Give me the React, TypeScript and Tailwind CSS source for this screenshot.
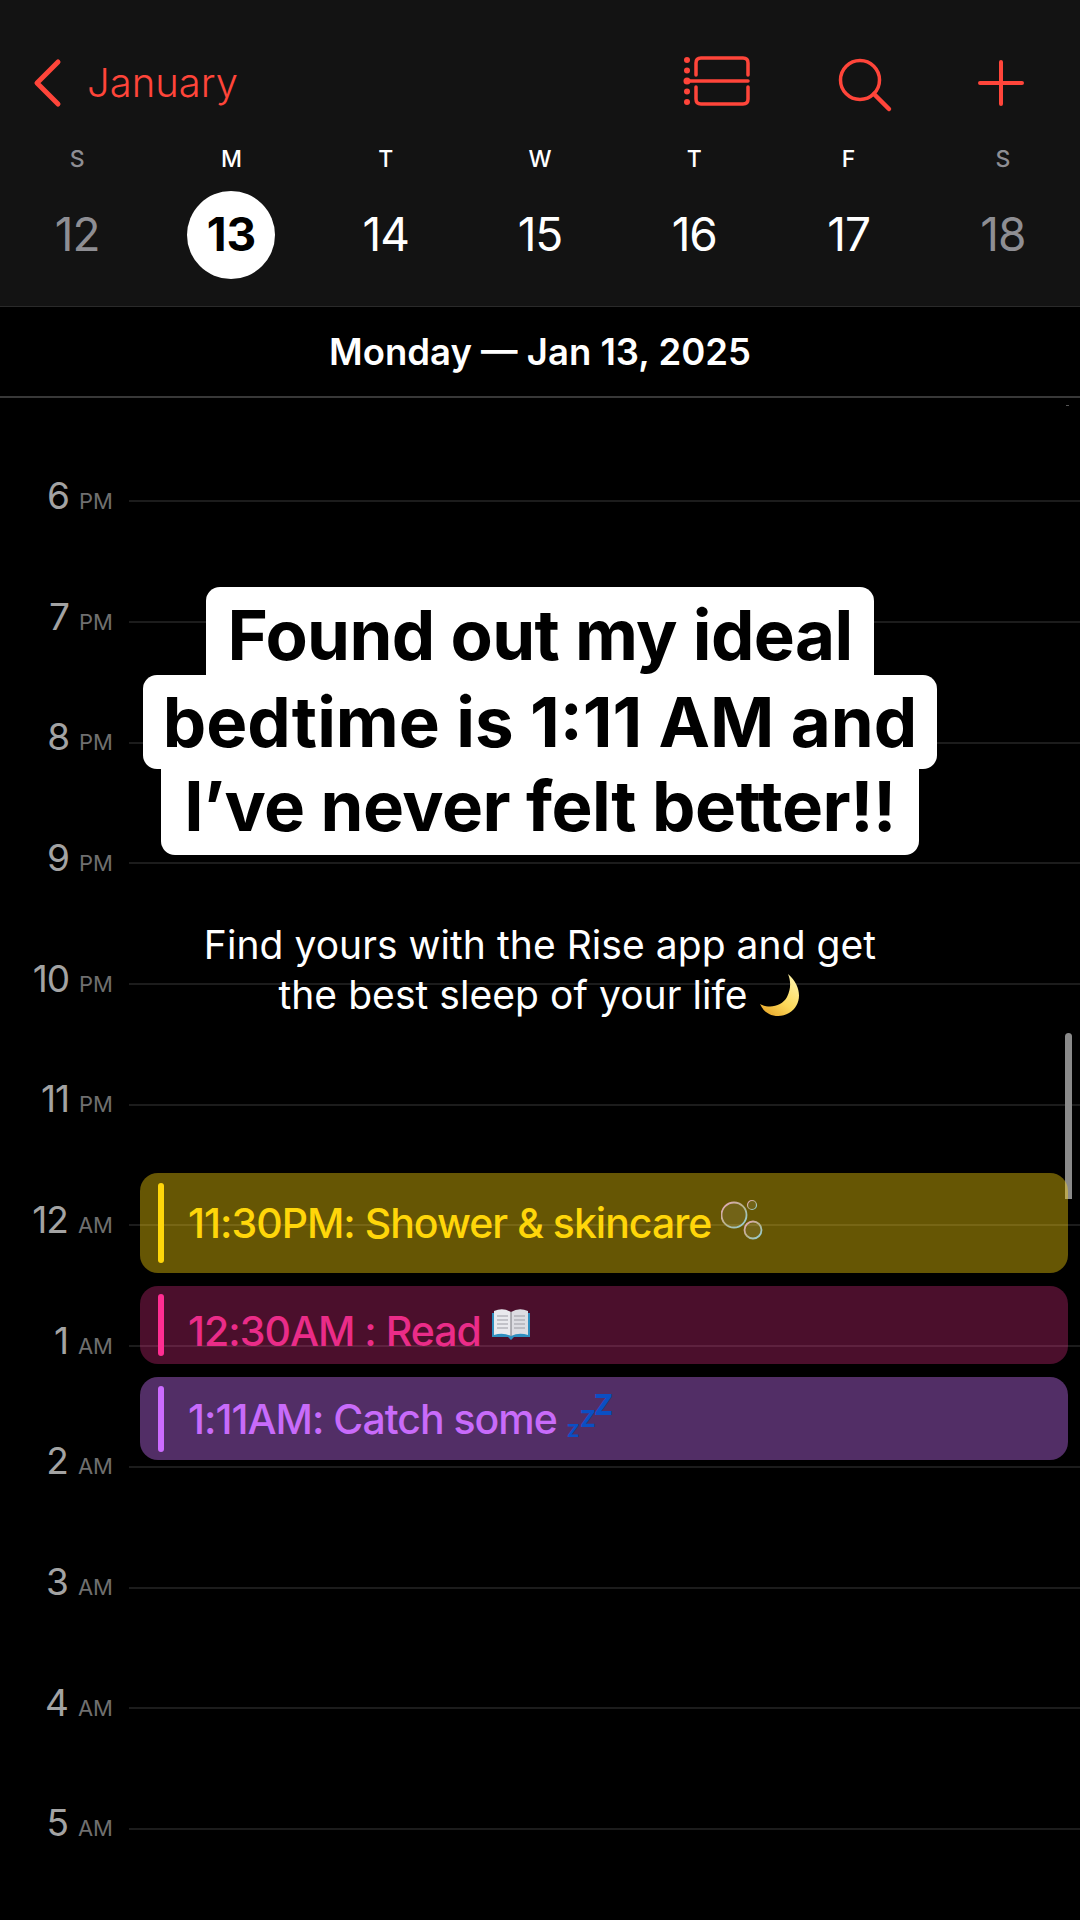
import React from "react";

const font = { fontFamily: "Inter, 'Noto Sans', sans-serif" };

const days = [
  { l: "S", n: "12", muted: true },
  { l: "M", n: "13", today: true },
  { l: "T", n: "14" },
  { l: "W", n: "15" },
  { l: "T", n: "16" },
  { l: "F", n: "17" },
  { l: "S", n: "18", muted: true },
];

const hours = [
  ["6", "PM"], ["7", "PM"], ["8", "PM"], ["9", "PM"], ["10", "PM"], ["11", "PM"],
  ["12", "AM"], ["1", "AM"], ["2", "AM"], ["3", "AM"], ["4", "AM"], ["5", "AM"],
];

function Chevron() {
  return (
    <svg width="30" height="50" viewBox="0 0 30 50" fill="none" className="shrink-0">
      <path d="M26 4 L5 25 L26 46" stroke="#ff453a" strokeWidth="5" strokeLinecap="round" strokeLinejoin="round" />
    </svg>
  );
}

function DayListIcon() {
  return (
    <svg width="68" height="54" viewBox="0 0 68 54" fill="none" className="shrink-0">
      <g fill="#ff453a">
        <circle cx="4" cy="4" r="3" />
        <circle cx="4" cy="14.5" r="3" />
        <circle cx="4" cy="25" r="3.5" />
        <circle cx="4" cy="35.5" r="3" />
        <circle cx="4" cy="46" r="3" />
      </g>
      <path d="M4 25 H65" stroke="#ff453a" strokeWidth="3.5" strokeLinecap="round" />
      <path d="M13 19 V7 Q13 2 18 2 H60 Q65 2 65 7 V19" stroke="#ff453a" strokeWidth="3.5" strokeLinecap="round" />
      <path d="M13 31 V43 Q13 48 18 48 H60 Q65 48 65 43 V31" stroke="#ff453a" strokeWidth="3.5" strokeLinecap="round" />
    </svg>
  );
}

function SearchIcon() {
  return (
    <svg width="56" height="56" viewBox="0 0 56 56" fill="none" className="shrink-0">
      <circle cx="22" cy="22" r="19.5" stroke="#ff453a" strokeWidth="3.5" />
      <path d="M36 36 L51 51" stroke="#ff453a" strokeWidth="4.5" strokeLinecap="round" />
    </svg>
  );
}

function PlusIcon() {
  return (
    <svg width="46" height="46" viewBox="0 0 46 46" fill="none" className="shrink-0">
      <path d="M23 2 V44 M2 23 H44" stroke="#ff453a" strokeWidth="4" strokeLinecap="round" />
    </svg>
  );
}

function Moon() {
  return (
    <svg width="44" height="44" viewBox="0 0 44 44" className="inline-block align-[-8px] ml-[10px]">
      <defs>
        <linearGradient id="moonG" x1="0.9" y1="0" x2="0.2" y2="1">
          <stop offset="0" stopColor="#fff6b0" />
          <stop offset="0.6" stopColor="#fbd85a" />
          <stop offset="1" stopColor="#e9a92c" />
        </linearGradient>
      </defs>
      <path d="M30 1 C45 14 44 32 31 40 C21 46 7 43 2 31 C12 36 24 33 29 24 C33 16 33 8 30 1 Z" fill="url(#moonG)" />
    </svg>
  );
}

function Bubbles() {
  const Rim = ({ cx, cy, r }: { cx: number; cy: number; r: number }) => (
    <circle cx={cx} cy={cy} r={r} fill="#ffffff" fillOpacity="0.08" stroke="url(#bubG)" strokeWidth={r > 6 ? 1.8 : 1.2} />
  );
  return (
    <svg width="42" height="42" viewBox="0 0 42 42" className="shrink-0 ml-[10px] mt-[-6px]">
      <defs>
        <linearGradient id="bubG" x1="0" y1="0" x2="1" y2="1">
          <stop offset="0" stopColor="#e7a9c0" />
          <stop offset="0.5" stopColor="#b8b28a" />
          <stop offset="1" stopColor="#8fd3e6" />
        </linearGradient>
      </defs>
      <Rim cx={13} cy={16} r={12.5} />
      <Rim cx={31} cy={6} r={4.5} />
      <Rim cx={32} cy={31} r={8.5} />
    </svg>
  );
}

function Book() {
  return (
    <svg width="40" height="33" viewBox="0 0 40 33" className="shrink-0 ml-[10px] mt-[-2px]">
      <path d="M1 5 H39 V29 H23 L20 32 L17 29 H1 Z" fill="#2f8fc0" />
      <path d="M3 3 Q12 -1 20 4 V28 Q12 24 3 27 Z" fill="#e9e9ee" />
      <path d="M37 3 Q28 -1 20 4 V28 Q28 24 37 27 Z" fill="#dcdce2" />
      <path d="M6 8 H17 M6 12 H17 M6 16 H17 M6 20 H17 M23 8 H34 M23 12 H34 M23 16 H34 M23 20 H34" stroke="#9b9ba3" strokeWidth="1.2" />
      <path d="M20 4 V28" stroke="#77777f" strokeWidth="1" />
    </svg>
  );
}

function Zzz() {
  return (
    <svg width="46" height="43" viewBox="0 0 46 43" className="shrink-0 ml-[10px] mt-[-4px] overflow-visible" style={font}>
      <g fill="#0b4fc4" fontWeight="800">
        <text x="0" y="42" fontSize="18">Z</text>
        <text x="13" y="32" fontSize="23">Z</text>
        <text x="27" y="20" fontSize="28">Z</text>
      </g>
    </svg>
  );
}

export default function App() {
  return (
    <div className="relative w-[1080px] h-[1920px] bg-black overflow-hidden text-white" style={font}>
      {/* Header */}
      <header className="h-[307px] bg-[#131313] border-b border-[#2a2a2a] pt-[58px]">
        <div className="flex items-center h-[50px] pl-[32px]">
          <Chevron />
          <span className="ml-[25px] text-[40px] leading-[50px] font-light text-[#ff453a]">January</span>
          <div className="ml-auto flex items-center">
            <DayListIcon />
            <div className="ml-[87px] mt-[6px]"><SearchIcon /></div>
            <div className="ml-[84px] mr-[56px]"><PlusIcon /></div>
          </div>
        </div>
        <div className="grid grid-cols-7 mt-[39px]">
          {days.map((d, i) => (
            <div key={i} className="flex flex-col items-center">
              <span className={`text-[23px] leading-[24px] font-medium ${d.muted ? "text-[#8e8e93]" : "text-white"}`}>{d.l}</span>
              <span
                className={`mt-[20px] w-[88px] h-[88px] rounded-full flex items-center justify-center text-[46px] ${
                  d.today ? "bg-white text-black font-bold tracking-[0px]" : d.muted ? "text-[#8e8e93] tracking-[-1px]" : "text-white tracking-[-1px]"
                }`}
              >
                <span className="mt-[-2px]">{d.n}</span>
              </span>
            </div>
          ))}
        </div>
      </header>

      {/* Date bar */}
      <div className="h-[91px] pt-[2px] flex items-center justify-center border-b-2 border-[#383838] text-[36.5px] font-semibold text-white">
        Monday — Jan 13, 2025
      </div>

      {/* Timeline */}
      <div className="pt-[43px]">
        {hours.map(([h, p]) => (
          <div key={h + p} className="flex items-center h-[120.7px]">
            <div className="w-[113px] shrink-0 flex items-baseline justify-end mt-[-6px] mr-[16px]">
              <span className="text-[37px] leading-[40px] text-[#a3a3a3] tracking-[-1px]">{h}</span>
              <span className="ml-[10px] text-[22px] leading-[40px] text-[#6f6f6f]">{p}</span>
            </div>
            <div className="flex-1 h-[2px] bg-[#1c1c1c]" />
          </div>
        ))}
      </div>

      {/* tiny tick and scrollbar */}
      <div className="absolute left-[1066px] top-[405px] w-[3px] h-px bg-[#555555]" />
      <div className="absolute left-[1065px] top-[1033px] w-[7px] h-[166px] rounded-t-[4px] bg-[#8a8a8a]" />

      {/* Events */}
      <div className="absolute left-[140px] top-[1173px] w-[928px] h-[100px] rounded-[18px] bg-[#ffd60a]/40 flex items-center pl-[18px]">
        <div className="w-[6px] h-[80px] rounded-full bg-[#ffd60a]" />
        <span className="ml-[24px] text-[41px] leading-[50px] font-[450] text-[#ffd60a] tracking-[-1px]">11:30PM: Shower &amp; skincare</span>
        <Bubbles />
      </div>
      <div className="absolute left-[140px] top-[1286px] w-[928px] h-[78px] rounded-[18px] bg-[#f73293]/30 flex items-center pl-[18px]">
        <div className="w-[6px] h-[62px] rounded-full bg-[#ff2d92]" />
        <span className="ml-[24px] mt-[12px] text-[41px] leading-[50px] font-[450] text-[#ea2c88] tracking-[-1px]">12:30AM : Read</span>
        <Book />
      </div>
      <div className="absolute left-[140px] top-[1377px] w-[928px] h-[83px] rounded-[18px] bg-[#cd73ff]/40 flex items-center pl-[18px]">
        <div className="w-[6px] h-[66px] rounded-full bg-[#cc6bff]" />
        <span className="ml-[24px] text-[41px] leading-[50px] font-[450] text-[#c86bfa] tracking-[-1px]">1:11AM: Catch some</span>
        <Zzz />
      </div>

      {/* Caption */}
      <div className="absolute left-0 right-0 top-[587px] flex flex-col items-center text-black font-bold text-[69px] text-center">
        <div className="h-[88px] w-[668px] leading-[96px] bg-white rounded-t-[14px] tracking-[-0.6px] whitespace-nowrap">Found out my ideal</div>
        <div className="h-[94px] w-[794px] leading-[95px] bg-white rounded-[14px] tracking-[0px] whitespace-nowrap">bedtime is 1:11 AM and</div>
        <div className="h-[86px] w-[758px] leading-[75px] bg-white rounded-b-[14px] tracking-[-0.5px] whitespace-nowrap">I’ve never felt better!!</div>
      </div>

      <div className="absolute left-0 right-0 top-[920px] text-center text-white text-[39px] tracking-[0.05px] leading-[50px]">
        <div>Find yours with the Rise app and get</div>
        <div>the best sleep of your life<Moon /></div>
      </div>
    </div>
  );
}
